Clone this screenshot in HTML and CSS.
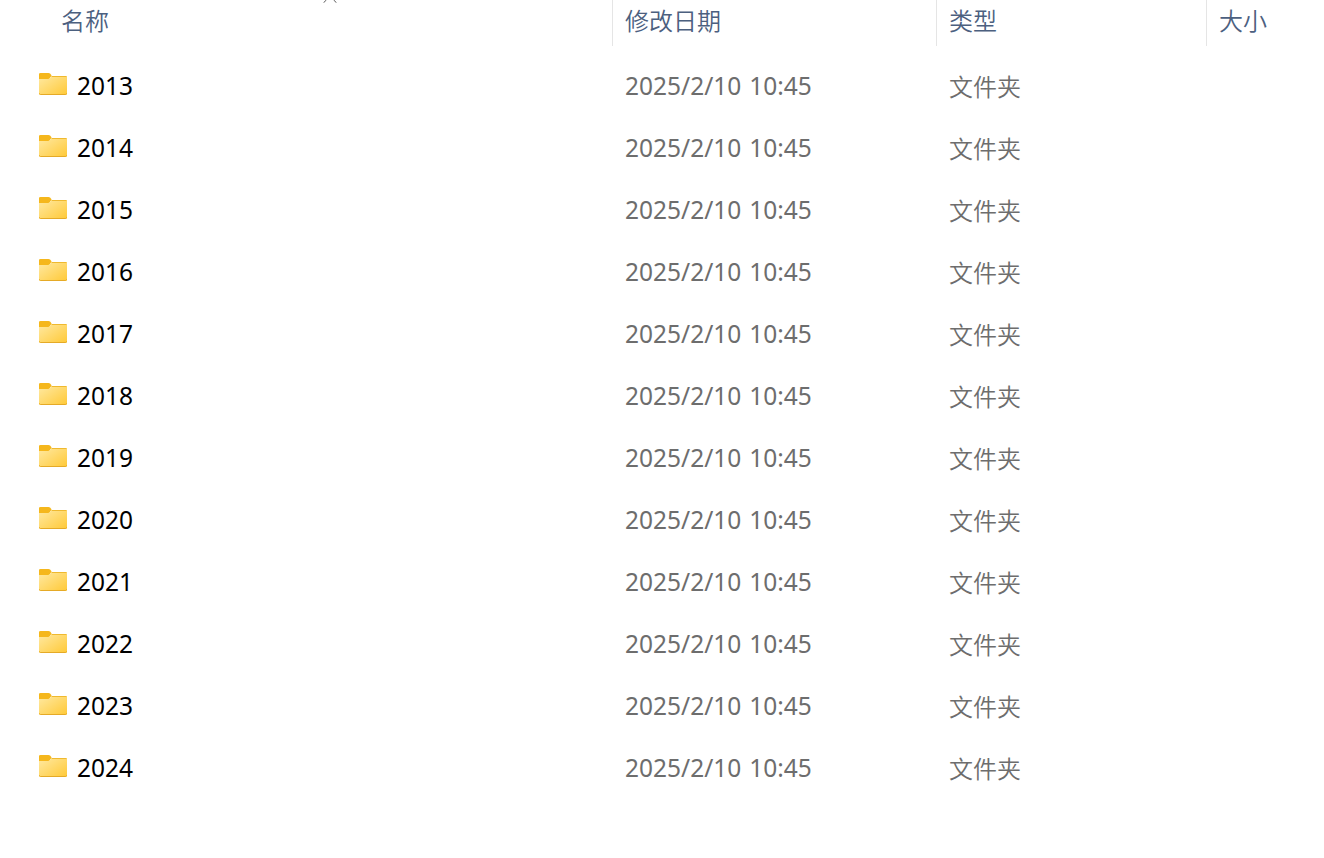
FILE: index.html
```html
<!DOCTYPE html>
<html lang="zh-CN">
<head>
    <meta charset="UTF-8" />
    <meta name="viewport" content="width=device-width, initial-scale=1">
    <title>文件夹</title>
    <link rel="stylesheet" href="styles.css">
</head>
<body>
<svg class="defs" width="0" height="0">
    <defs>
        <linearGradient id="folderFill" x1="0" y1="0" x2="1" y2="1">
            <stop offset="0" stop-color="#ffe9a2" />
            <stop offset="1" stop-color="#ffc937" />
        </linearGradient>
        <symbol id="folder" viewBox="0 0 28 24">
            <path d="M0 10V2Q0 1 1.500 1H9.500Q10.500 1 11.300 1.800L12.600 3.500L11 6L8 10Z" fill="#f5b71c" />
            <path d="M0 7H9Q10 7 10.800 6.200L12.400 4.600Q13 4 14 4H27Q28 4 28 5V21.500Q28 23 26.500 23H1.500Q0 23 0 21.500Z" fill="url(#folderFill)" />
            <path d="M12.500 4.500H27.500" stroke="#efb92f" />
            <path d="M.3 21.300Q.5 22.500 1.500 22.500H26.500Q27.500 22.500 27.700 21.300" fill="none" stroke="#e5aa27" />
        </symbol>
    </defs>
</svg>
<div class="file-list">
    <div class="header">
        <div class="col name">
            名称
            <svg class="sort" width="14" height="3" viewBox="0 0 14 3"><path d="M.5 2.800L3.500 -.2M13.500 2.800L10.500 -.2" fill="none" stroke="#555" /></svg>
        </div>
        <div class="col">修改日期</div>
        <div class="col">类型</div>
        <div class="col">大小</div>
    </div>
    <div class="rows" id="rows"></div>
</div>

<script>
    const rows = document.getElementById('rows');
    for (let year = 2013; year <= 2024; year++) {
        rows.insertAdjacentHTML('beforeend', `
            <div class="row">
                <div class="cell name"><svg class="icon"><use href="#folder" /></svg><span>${year}</span></div>
                <div class="cell date">2025/2/10 10:45</div>
                <div class="cell type">文件夹</div>
                <div class="cell"></div>
            </div>`);
    }
</script>
</body>
</html>
```
FILE: styles.css
```css
:root {
    --header: #4c607f;
    --text: #000;
    --muted: #6d6d6d;
    --line: #e5e5e5;
}
* { margin: 0; padding: 0; box-sizing: border-box; }
body {
    font-family: 'Noto Sans', 'Noto Sans CJK SC', sans-serif;
    font-size: 24.500px;
    background: #fff;
    color: var(--text);
    overflow: hidden;
}
.defs {
    display: block;
}
.header, .row {
    display: grid;
    grid-template-columns: 612px 324px 270px 1fr;
}
.header {
    height: 46px;
    margin-bottom: 9px;
    font-family: 'Noto Sans CJK SC', sans-serif;
    font-size: 24px;
    font-weight: 350;
    line-height: 40px;
    color: var(--header);
}
.col {
    padding-left: 12px;
    border-left: 1px solid var(--line);
}
.col.name {
    position: relative;
    padding-left: 61px;
    border-left: none;
}
.sort {
    position: absolute;
    top: 0;
    left: 323px;
}
.row {
    height: 62px;
    line-height: 62px;
}
.cell {
    padding-left: 13px;
    color: var(--muted);
    white-space: nowrap;
}
.cell.name {
    display: flex;
    align-items: center;
    gap: 10px;
    padding-left: 39px;
    color: var(--text);
}
.icon {
    width: 28px;
    height: 24px;
    margin-bottom: 4px;
}
.date {
    word-spacing: 1.500px;
}
.type {
    font-family: 'Noto Sans CJK SC', sans-serif;
    font-size: 24px;
    font-weight: 350;
    line-height: 61px;
}
```
